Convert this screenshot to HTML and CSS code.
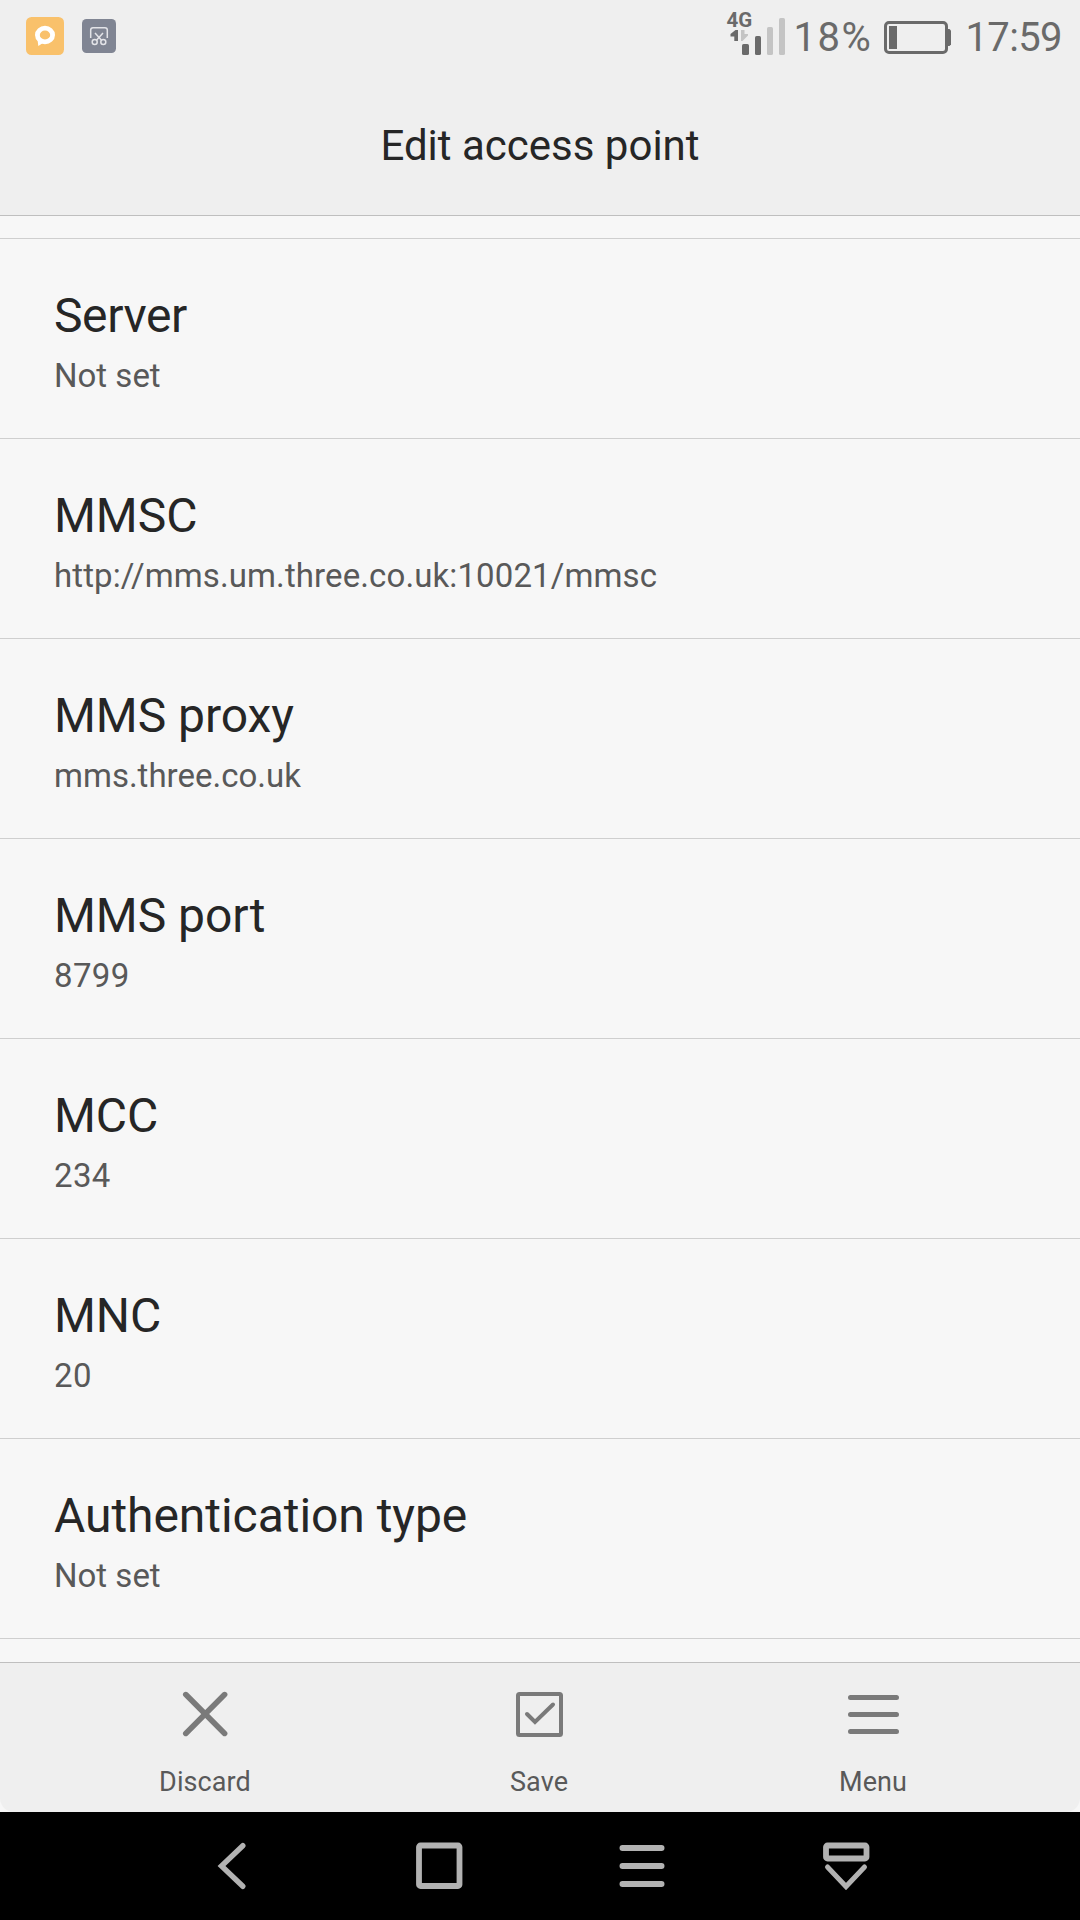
FILE: index.html
```html
<!DOCTYPE html>
<html lang="en">
<head>
<meta charset="utf-8">
<title>Edit access point</title>
<link rel="stylesheet" href="styles.css">
</head>
<body>
<div class="screen">
  <header class="top">
    <div class="status">
      <div class="notifications">
        <svg class="app-chat" viewBox="0 0 38 38"><rect width="38" height="38" rx="5.5" fill="#f9c16b"/><ellipse cx="19" cy="18" rx="7.6" ry="6.8" fill="none" stroke="#fff" stroke-width="4.8"/><path d="M11.5 22L12.3 29L18.5 25Z" fill="#fff"/></svg>
        <svg class="app-shot" viewBox="0 0 34 34"><rect width="34" height="34" rx="4.5" fill="#808593"/><g fill="none" stroke="#e3e4e8" stroke-width="1.5"><path d="M8.7 19V11Q8.7 8.7 11 8.7H23Q25.3 8.7 25.3 11V19"/><path d="M13 14L19.3 21M21 14L14.7 21"/><circle cx="12.7" cy="23" r="2.5"/><circle cx="21.3" cy="23" r="2.5"/></g></svg>
      </div>
      <div class="indicators">
        <div class="signal">
          <span class="network">4G</span>
          <svg class="bars" viewBox="0 0 60 48"><g fill="#6a6a6a"><path d="M11 20V31H7.3V26.5H3.5V24L8.5 20Z"/><rect x="15" y="34" width="7" height="11" rx="1.6"/><rect x="28" y="26" width="6" height="19" rx="1.6"/></g><g fill="#c4c4c4"><path d="M14 20H17.5V24H21V25.5L15.5 31H14Z"/><rect x="40" y="17" width="6" height="28" rx="1.6"/><rect x="52" y="8" width="6" height="37" rx="1.6"/></g></svg>
        </div>
        <span class="percent">18%</span>
        <svg class="battery" viewBox="0 0 68 34"><rect x="1.5" y="1.5" width="61" height="30" rx="3.5" fill="none" stroke="#6a6a6a" stroke-width="3"/><rect x="5" y="5" width="8" height="23" fill="#6a6a6a"/><path d="M63 8H65.5L67 9.5V23.5L65.5 25H63Z" fill="#6a6a6a"/></svg>
        <span class="clock">17:59</span>
      </div>
    </div>
    <h1 class="title">Edit access point</h1>
  </header>
  <main class="list">
    <section class="row"><h2 class="name tight">Server</h2><p class="value">Not set</p></section>
    <section class="row"><h2 class="name">MMSC</h2><p class="value url">http://mms.um.three.co.uk:10021/mmsc</p></section>
    <section class="row"><h2 class="name">MMS proxy</h2><p class="value">mms.three.co.uk</p></section>
    <section class="row"><h2 class="name">MMS port</h2><p class="value number">8799</p></section>
    <section class="row"><h2 class="name">MCC</h2><p class="value number">234</p></section>
    <section class="row"><h2 class="name">MNC</h2><p class="value number">20</p></section>
    <section class="row"><h2 class="name">Authentication type</h2><p class="value">Not set</p></section>
  </main>
  <footer class="actions">
    <div class="action"><svg class="icon" viewBox="0 0 60 60"><path d="M10.8 10.6L49.6 49.4M49.6 10.6L10.8 49.4" stroke-width="5.6"/></svg><span>Discard</span></div>
    <div class="action"><svg class="icon" viewBox="0 0 60 60"><rect x="9" y="10" width="43" height="41" rx="1.5" stroke-width="4"/><path class="check" d="M18 30L26 38L44 20.5" stroke-width="4"/></svg><span>Save</span></div>
    <div class="action"><svg class="icon" viewBox="0 0 60 60"><path d="M7.5 13.5H53.5M7.5 30.5H53.5M7.5 47.5H53.5" stroke-width="5"/></svg><span>Menu</span></div>
  </footer>
  <nav class="nav">
    <svg class="icon" viewBox="0 0 60 60"><path d="M37.8 9.7L16.5 30L37.8 50.3" stroke-width="5.4"/></svg>
    <svg class="icon" viewBox="0 0 60 60"><rect x="10" y="9.5" width="40.5" height="40.5" rx="1.5" stroke-width="5.8"/></svg>
    <svg class="icon" viewBox="0 0 60 60"><path d="M9.5 12H48.5M9.5 30H48.5M9.5 48H48.5" stroke-width="6"/></svg>
    <svg class="icon" viewBox="0 0 60 60"><rect x="9" y="9.5" width="40.5" height="13" rx="1.5" stroke-width="5.8"/><path class="check" d="M10.5 31L29 50.5L47.5 31" stroke-width="5"/></svg>
  </nav>
</div>
</body>
</html>
```
FILE: styles.css
```css
* { box-sizing: border-box; margin: 0; }
body { font-family: Roboto, sans-serif; background: #f7f7f7; color: #262626; }
svg { display: block; flex: none; }
.screen { width: 1080px; height: 1920px; display: flex; flex-direction: column; overflow: hidden; }
.top { height: 216px; background: #efefef; border-bottom: 1px solid #bfbfbf; }
.status { height: 72px; display: flex; justify-content: space-between; padding: 0 18px 0 26px; color: #6a6a6a; }
.notifications { display: flex; align-items: center; gap: 18px; }
.app-chat { width: 38px; height: 38px; }
.app-shot { width: 34px; height: 34px; }
.indicators { display: flex; font-size: 40px; line-height: 75px; }
.signal { position: relative; width: 60px; height: 48px; margin-top: 10px; }
.bars { width: 60px; height: 48px; }
.network { position: absolute; left: 0; top: -2px; font-size: 20.5px; font-weight: 700; line-height: 24px; }
.percent { margin-left: 7px; letter-spacing: 1.5px; }
.battery { width: 68px; height: 34px; margin: 21px 13px 0 12px; }
.clock { letter-spacing: -0.6px; }
.title { font-size: 42px; font-weight: 400; line-height: 147px; text-align: center; }
.list { height: 1446px; padding-top: 22px; }
.row { height: 200px; padding: 49px 54px 0; border-top: 1px solid #cfcfcf; }
.row:last-child { height: 201px; border-bottom: 1px solid #cfcfcf; }
.name { font-size: 48px; font-weight: 400; line-height: 56px; letter-spacing: -0.05px; }
.name.tight { letter-spacing: -0.4px; }
.value { margin-top: 12px; font-size: 33px; line-height: 40px; color: #595959; }
.value.url { letter-spacing: 0.11px; }
.value.number { letter-spacing: 0.35px; }
.actions { height: 150px; padding: 21px 40px 0 38px; background: #efefef; border-top: 1px solid #bfbfbf; border-radius: 0 0 14px 14px; display: flex; }
.action { width: 334px; display: flex; flex-direction: column; align-items: center; font-size: 27px; line-height: 32px; color: #595959; gap: 22px; letter-spacing: 0.1px; }
.icon { width: 60px; height: 60px; fill: none; stroke: #7a7a7a; stroke-linecap: round; }
.check { stroke-linejoin: miter; }
.nav { height: 108px; padding: 24px 0 0 205px; background: #000; display: flex; gap: 144px; }
.nav .icon { stroke: #b2b2b2; }
```
